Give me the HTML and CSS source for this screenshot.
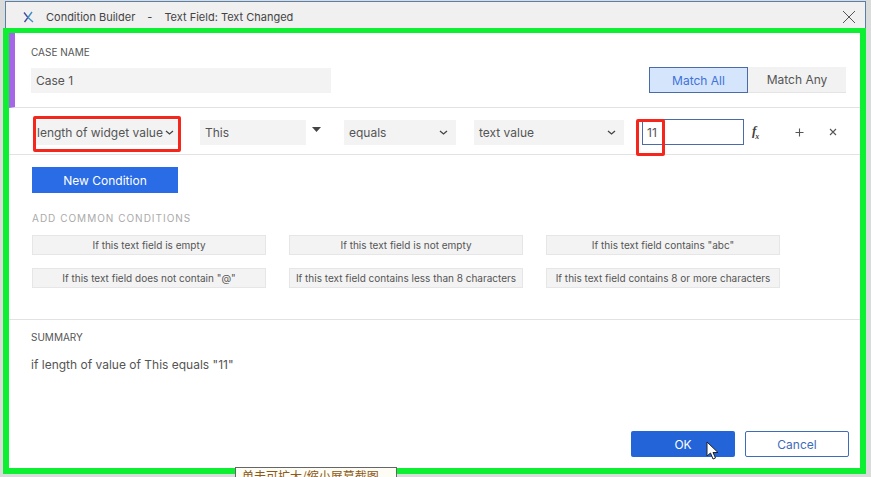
FILE: index.html
```html
<!DOCTYPE html>
<html lang="en">
<head>
  <meta charset="UTF-8" />
  <title>Condition Builder</title>
  <link rel="stylesheet" href="styles.css">
</head>
<body>
  <div class="titlebar">
    <svg class="logo" width="14" height="12" viewBox="0 0 14 12"><path d="M2 1.5 L6 6.5 L2.5 11" fill="none" stroke="#4a4a9a" stroke-width="1.4"/><path d="M10 1 L6 6.5 L11 11" fill="none" stroke="#3f8fc4" stroke-width="1.4"/></svg>
    <span class="title">Condition Builder</span>
    <span class="title-sep">-</span>
    <span class="title">Text Field: Text Changed</span>
    <svg class="close" width="14" height="14" viewBox="0 0 14 14"><path d="M1 1 L13 13 M13 1 L1 13" stroke="#555" stroke-width="1"/></svg>
  </div>

  <div class="frame">
    <section class="case-row">
      <div class="case-name">
        <div class="label">CASE NAME</div>
        <div class="field case-input">Case 1</div>
      </div>
      <div class="match">
        <div class="match-btn on">Match All</div>
        <div class="match-btn">Match Any</div>
      </div>
    </section>

    <section class="cond-row">
      <div class="field sel w-first">length of widget value
        <svg class="chev" width="9" height="5" viewBox="0 0 9 5"><path d="M1 1 L4.5 4 L8 1" fill="none" stroke="#444" stroke-width="1.3"/></svg>
      </div>
      <div class="field w-this">This</div>
      <svg class="caret" width="9" height="5" viewBox="0 0 9 5"><path d="M0 0 H9 L4.5 5 Z" fill="#444"/></svg>
      <div class="field sel w-eq">equals
        <svg class="chev" width="9" height="5" viewBox="0 0 9 5"><path d="M1 1 L4.5 4 L8 1" fill="none" stroke="#444" stroke-width="1.3"/></svg>
      </div>
      <div class="field sel w-type">text value
        <svg class="chev" width="9" height="5" viewBox="0 0 9 5"><path d="M1 1 L4.5 4 L8 1" fill="none" stroke="#444" stroke-width="1.3"/></svg>
      </div>
      <div class="value-input">11</div>
      <span class="fx">f<sub>x</sub></span>
      <svg class="plus" width="9" height="9" viewBox="0 0 9 9"><path d="M4.5 0.5 V8.5 M0.5 4.5 H8.5" stroke="#555" stroke-width="1.1"/></svg>
      <svg class="remove" width="8" height="8" viewBox="0 0 8 8"><path d="M1 1 L7 7 M7 1 L1 7" stroke="#555" stroke-width="1.1"/></svg>
    </section>

    <section class="common">
      <div class="new-btn">New Condition</div>
      <div class="common-label">ADD COMMON CONDITIONS</div>
      <div class="common-grid">
        <div class="common-btn">If this text field is empty</div>
        <div class="common-btn">If this text field is not empty</div>
        <div class="common-btn">If this text field contains "abc"</div>
        <div class="common-btn">If this text field does not contain "@"</div>
        <div class="common-btn">If this text field contains less than 8 characters</div>
        <div class="common-btn">If this text field contains 8 or more characters</div>
      </div>
    </section>

    <section class="summary">
      <div class="label">SUMMARY</div>
      <div class="summary-text">if length of value of This equals "11"</div>
    </section>

    <div class="actions">
      <div class="ok">OK</div>
      <div class="cancel">Cancel</div>
    </div>
  </div>

  <!-- annotations on top of the dialog -->
  <div class="mark mark-a"></div>
  <div class="mark mark-b"></div>
  <svg class="pointer" width="14" height="20" viewBox="0 0 14 20"><path d="M1 1 V15 L4.5 12 L7 18 L9.5 17 L7 11.5 H12 Z" fill="#fff" stroke="#222" stroke-width="1"/></svg>
  <div class="tip">单击可扩大/缩小屏幕截图</div>
</body>
</html>
```

FILE: styles.css
```css
* { box-sizing: border-box; margin: 0; padding: 0; }
html, body { height: 100%; overflow: hidden; }
body {
  position: relative;
  background-color: #d9dcdb;
  font-family: Inter, 'Noto Sans', sans-serif;
  color: #555;
  font-size: 12px;
  padding-top: 1px;
}

.titlebar {
  display: flex;
  align-items: center;
  height: 27px;
  margin: 0 5px 0 5px;
  padding: 4px 9px 0 16px;
  background-color: #f0f0f0;
  border-top: 1px solid #5a7fa8;
  border-left: 1px solid #5a7fa8;
  border-right: 1px solid #5a7fa8;
  font-size: 11px;
  color: #444;
}
.logo { margin-right: 10px; }
.title-sep { margin: 0 12px; }
.close { margin-left: auto; }

.frame {
  display: flex;
  flex-direction: column;
  width: 863px;
  height: 446px;
  margin-left: 3px;
  background-color: #fff;
  border: 6px solid #0cf031;
  border-top-width: 5px;
}

.case-row {
  display: flex;
  justify-content: space-between;
  align-items: flex-end;
  height: 75px;
  padding: 0 14px 14px 16px;
  border-left: 6px solid #a566e8;
  border-bottom: 1px solid #e2e2e2;
}
.label { font-size: 10px; color: #555; }
.case-name .label { margin-bottom: 10px; }
.field {
  display: flex;
  align-items: center;
  height: 25px;
  padding: 0 5px;
  background-color: #f3f3f3;
  color: #555;
}
.case-input { width: 300px; }
.match { display: flex; }
.match-btn {
  display: flex;
  align-items: center;
  justify-content: center;
  width: 98px;
  height: 26px;
  background-color: #f2f2f2;
  border-bottom: 1px solid #e4e4e4;
}
.match-btn.on {
  width: 99px;
  background-color: #d5e5fb;
  border: 1px solid #4a6aa8;
  color: #3f72d8;
}

.cond-row {
  display: flex;
  align-items: center;
  height: 47px;
  padding: 2px 0 0 27px;
  border-bottom: 1px solid #e2e2e2;
}
.sel { justify-content: space-between; }
.chev { flex: none; }
.w-first { width: 142px; padding: 0 4px 0 1px; margin-right: 22px; }
.w-this { width: 106px; }
.caret { margin: 0 23px 6px 6px; }
.w-eq { width: 112px; margin-right: 18px; padding-right: 8px; }
.w-type { width: 150px; margin-right: 18px; padding-right: 8px; }
.value-input {
  display: flex;
  align-items: center;
  width: 102px;
  height: 26px;
  padding-left: 4px;
  background-color: #fff;
  border: 1px solid #4a6aa8;
}
.fx {
  width: 14px;
  margin-left: 8px;
  font-family: 'Liberation Serif', serif;
  font-style: italic;
  font-weight: bold;
  font-size: 13px;
  color: #444;
}
.fx sub { font-size: 8px; margin-left: -1px; }
.plus { margin-left: 29px; }
.remove { margin-left: 25px; }

.common { padding: 12px 0 0 23px; height: 165px; border-bottom: 1px solid #e2e2e2; }
.new-btn {
  display: flex;
  align-items: center;
  justify-content: center;
  width: 146px;
  height: 26px;
  background-color: #2a6be6;
  color: #fff;
}
.common-label {
  margin-top: 19px;
  font-size: 10px;
  letter-spacing: 1px;
  color: #aaa;
}
.common-grid {
  display: grid;
  grid-template-columns: repeat(3, 234px);
  grid-auto-rows: 20px;
  column-gap: 23px;
  row-gap: 13px;
  margin-top: 11px;
}
.common-btn {
  display: flex;
  align-items: center;
  justify-content: center;
  background-color: #f3f3f3;
  border: 1px solid #e6e6e6;
  font-size: 10px;
  white-space: nowrap;
}

.summary { padding: 11px 0 0 22px; }
.summary-text { margin-top: 14px; }

.actions {
  display: flex;
  justify-content: flex-end;
  gap: 10px;
  margin-top: auto;
  padding: 0 11px 11px 0;
}
.ok, .cancel {
  display: flex;
  align-items: center;
  justify-content: center;
  width: 104px;
  height: 26px;
  border-radius: 2px;
}
.ok { background-color: #2365d8; color: #fff; }
.cancel { background-color: #fff; border: 1px solid #3f6cb8; color: #3f6cb8; }

/* overlays */
.mark {
  position: absolute;
  border: 3px solid #f5261c;
  border-radius: 2px;
}
.mark-a { left: 33px; top: 116px; width: 148px; height: 36px; }
.mark-b { left: 636px; top: 119px; width: 29px; height: 37px; }
.pointer { position: absolute; left: 706px; top: 441px; }
.tip {
  position: absolute;
  left: 235px;
  top: 467px;
  width: 162px;
  height: 20px;
  padding-left: 6px;
  background-color: #fdfdf5;
  border: 1px solid #666;
  font-family: 'Noto Sans CJK SC', sans-serif;
  font-size: 12px;
  line-height: 15px;
  color: #8a5a20;
}
```
